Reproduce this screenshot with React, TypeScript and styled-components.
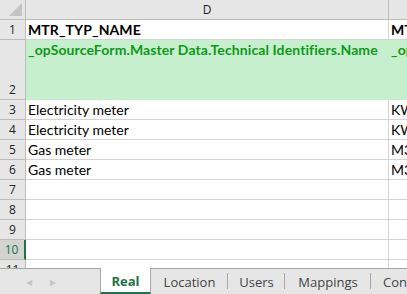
import React from 'react';
import styled, { createGlobalStyle } from 'styled-components';

const GlobalStyle = createGlobalStyle`
  html, body {
    margin: 0;
    padding: 0;
    background: #ffffff;
  }
  body {
    font-family: Lato, "Liberation Sans", sans-serif;
  }
`;

type Row = {
  num: string;
  d: string;
  e: string;
  height: number;
  kind?: 'head' | 'source';
  selected?: boolean;
};

const ROWS: Row[] = [
  { num: '1', d: 'MTR_TYP_NAME', e: 'MTR_UNIT', height: 20, kind: 'head' },
  {
    num: '2',
    d: '_opSourceForm.Master Data.Technical Identifiers.Name',
    e: '_opSourceForm',
    height: 60,
    kind: 'source',
  },
  { num: '3', d: 'Electricity meter', e: 'KWH', height: 20 },
  { num: '4', d: 'Electricity meter', e: 'KWH', height: 20 },
  { num: '5', d: 'Gas meter', e: 'M3', height: 20 },
  { num: '6', d: 'Gas meter', e: 'M3', height: 20 },
  { num: '7', d: '', e: '', height: 20 },
  { num: '8', d: '', e: '', height: 20 },
  { num: '9', d: '', e: '', height: 20 },
  { num: '10', d: '', e: '', height: 20, selected: true },
  { num: '11', d: '', e: '', height: 20 },
];

// 시트 탭 이름과 너비
const TABS = [
  { name: 'Real', width: 51 },
  { name: 'Location', width: 77 },
  { name: 'Users', width: 57 },
  { name: 'Mappings', width: 86 },
  { name: 'Configuration', width: 110 },
];

export default function App() {
  return (
    <>
      <GlobalStyle />
      <Window>
        {/* 시트 영역 */}
        <Sheet>
          <GridRow $height={20}>
            <Corner>
              <CornerMark />
            </Corner>
            <ColHead>D</ColHead>
            <ColHead>E</ColHead>
          </GridRow>
          {ROWS.map(row => (
            <GridRow key={row.num} $height={row.height}>
              <RowHead $selected={row.selected}>{row.num}</RowHead>
              <Cell $kind={row.kind}>{row.d}</Cell>
              <Cell $kind={row.kind}>{row.e}</Cell>
            </GridRow>
          ))}
        </Sheet>
        {/* 시트 탭 */}
        <TabBar>
          <Arrows>
            <Arrow>◀</Arrow>
            <Arrow>▶</Arrow>
          </Arrows>
          {TABS.map((tab, i) => (
            <Tab
              key={tab.name}
              $width={tab.width}
              $active={i === 0}
              $last={i === TABS.length - 1}>
              {tab.name}
            </Tab>
          ))}
        </TabBar>
      </Window>
    </>
  );
}

const Window = styled.div`
  width: 407px;
  height: 294px;
  display: flex;
  flex-direction: column;
  overflow: hidden;
  background: #ffffff;
`;

const Sheet = styled.div`
  height: 268px;
  overflow: hidden;
  display: flex;
  flex-direction: column;
`;

const GridRow = styled.div<{ $height: number }>`
  flex: none;
  height: ${p => p.$height}px;
  display: grid;
  grid-template-columns: 26px 363px 90px;
`;

const Corner = styled.div`
  position: relative;
  background: #e6e6e6;
  border-right: 1px solid #bcbcbc;
  border-bottom: 1px solid #bcbcbc;
`;

/** 좌상단 삼각형 */
const CornerMark = styled.div`
  position: absolute;
  right: 3px;
  bottom: 3px;
  width: 0;
  height: 0;
  border-left: 13px solid transparent;
  border-bottom: 13px solid #c4c4c4;
`;

const ColHead = styled.div`
  background: #e6e6e6;
  border-right: 1px solid #bcbcbc;
  border-bottom: 1px solid #bcbcbc;
  display: flex;
  align-items: center;
  justify-content: center;
  font-family: "Open Sans", "Noto Sans", sans-serif;
  font-size: 12px;
  color: #222;
  white-space: nowrap;
  overflow: hidden;
  padding-bottom: 1px;
`;

const RowHead = styled.div<{ $selected?: boolean }>`
  background: ${p => (p.$selected ? '#d3d3d3' : '#e6e6e6')};
  color: ${p => (p.$selected ? '#217346' : '#222')};
  border-right: ${p => (p.$selected ? '2px solid #217346' : '1px solid #bcbcbc')};
  border-bottom: 1px solid #bcbcbc;
  display: flex;
  align-items: flex-end;
  justify-content: center;
  font-family: "Open Sans", "Noto Sans", sans-serif;
  font-size: 12px;
  line-height: 18px;
  padding-right: ${p => (p.$selected ? '1px' : '0')};
`;

const Cell = styled.div<{ $kind?: 'head' | 'source' }>`
  background: ${p => (p.$kind === 'source' ? '#c6efce' : '#ffffff')};
  color: ${p => (p.$kind === 'source' ? '#0c9a17' : '#000')};
  font-weight: ${p => (p.$kind ? 700 : 400)};
  letter-spacing: ${p => (p.$kind ? '0.1px' : '0')};
  border-right: 1px solid ${p => (p.$kind === 'source' ? '#c6efce' : '#d4d4d4')};
  border-bottom: 1px solid ${p => (p.$kind === 'source' ? '#c6efce' : '#d4d4d4')};
  display: flex;
  align-items: ${p => (p.$kind === 'source' ? 'flex-start' : 'flex-end')};
  padding: ${p => (p.$kind === 'source' ? '1px 0 0 2px' : '0 0 0 2px')};
  font-size: 14px;
  line-height: 18px;
  white-space: nowrap;
  overflow: hidden;
`;

const TabBar = styled.div`
  height: 26px;
  display: flex;
  background: #e6e6e6;
`;

const Arrows = styled.div`
  flex: none;
  width: 100px;
  border-top: 1px solid #a6a6a6;
  display: flex;
  align-items: center;
  gap: 18px;
  padding-left: 26px;
  box-sizing: border-box;
`;

const Arrow = styled.span`
  font-size: 8px;
  color: #c6c6c6;
`;

const Tab = styled.div<{ $width: number; $active?: boolean; $last?: boolean }>`
  flex: none;
  width: ${p => p.$width}px;
  display: flex;
  align-items: center;
  justify-content: ${p => (p.$last ? 'flex-start' : 'center')};
  padding-left: ${p => (p.$last ? '12px' : '0')};
  height: 26px;
  box-sizing: border-box;
  font-family: "Open Sans", "Noto Sans", sans-serif;
  font-size: 13px;
  white-space: nowrap;
  ${p =>
    p.$active
      ? `
    background: #ffffff;
    color: #217346;
    font-weight: 700;
    border-left: 1px solid #a6a6a6;
    border-right: 1px solid #a6a6a6;
    border-bottom: 2px solid #217346;
    padding-top: 1px;
  `
      : `
    color: #444;
    border-top: 1px solid #a6a6a6;
    position: relative;
    ${
      p.$last
        ? ''
        : `&::after {
      content: '';
      position: absolute;
      right: 0;
      top: 4px;
      bottom: 5px;
      width: 1px;
      background: #a6a6a6;
    }`
    }
  `}
`;
